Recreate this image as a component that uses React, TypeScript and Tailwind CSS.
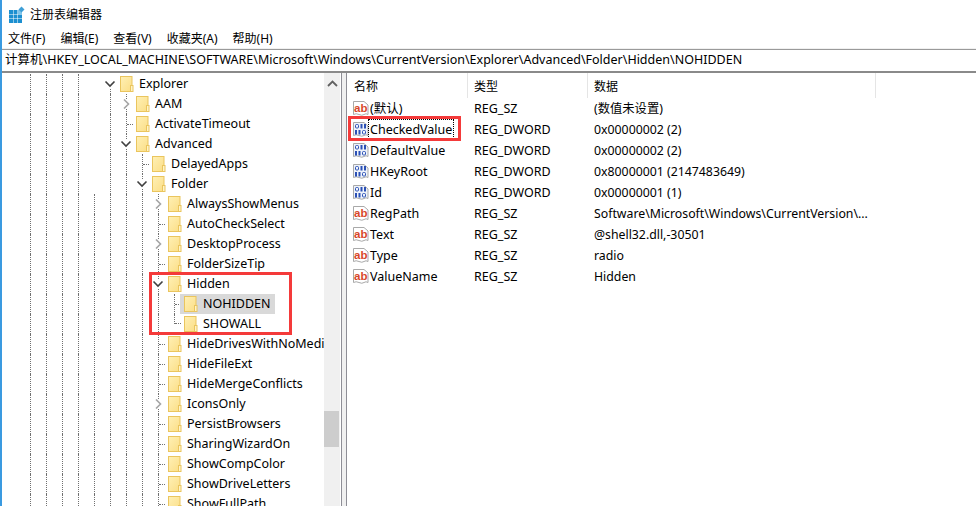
import React from "react";

type TreeRow = {
  name: string;
  depth: number;
  kind: "open" | "closed" | "leaf" | "last";
  selected?: boolean;
};

const treeRows: TreeRow[] = [
  { name: "Explorer", depth: 5, kind: "open" },
  { name: "AAM", depth: 6, kind: "closed" },
  { name: "ActivateTimeout", depth: 6, kind: "leaf" },
  { name: "Advanced", depth: 6, kind: "open" },
  { name: "DelayedApps", depth: 7, kind: "leaf" },
  { name: "Folder", depth: 7, kind: "open" },
  { name: "AlwaysShowMenus", depth: 8, kind: "closed" },
  { name: "AutoCheckSelect", depth: 8, kind: "leaf" },
  { name: "DesktopProcess", depth: 8, kind: "closed" },
  { name: "FolderSizeTip", depth: 8, kind: "leaf" },
  { name: "Hidden", depth: 8, kind: "open" },
  { name: "NOHIDDEN", depth: 9, kind: "leaf", selected: true },
  { name: "SHOWALL", depth: 9, kind: "last" },
  { name: "HideDrivesWithNoMedia", depth: 8, kind: "leaf" },
  { name: "HideFileExt", depth: 8, kind: "leaf" },
  { name: "HideMergeConflicts", depth: 8, kind: "leaf" },
  { name: "IconsOnly", depth: 8, kind: "closed" },
  { name: "PersistBrowsers", depth: 8, kind: "leaf" },
  { name: "SharingWizardOn", depth: 8, kind: "leaf" },
  { name: "ShowCompColor", depth: 8, kind: "leaf" },
  { name: "ShowDriveLetters", depth: 8, kind: "leaf" },
  { name: "ShowFullPath", depth: 8, kind: "leaf" },
];

const values = [
  { name: "(默认)", type: "REG_SZ", data: "(数值未设置)" },
  { name: "CheckedValue", type: "REG_DWORD", data: "0x00000002 (2)", focused: true },
  { name: "DefaultValue", type: "REG_DWORD", data: "0x00000002 (2)" },
  { name: "HKeyRoot", type: "REG_DWORD", data: "0x80000001 (2147483649)" },
  { name: "Id", type: "REG_DWORD", data: "0x00000001 (1)" },
  { name: "RegPath", type: "REG_SZ", data: "Software\\Microsoft\\Windows\\CurrentVersion\\..." },
  { name: "Text", type: "REG_SZ", data: "@shell32.dll,-30501" },
  { name: "Type", type: "REG_SZ", data: "radio" },
  { name: "ValueName", type: "REG_SZ", data: "Hidden" },
];

const menus = ["文件(F)", "编辑(E)", "查看(V)", "收藏夹(A)", "帮助(H)"];

function AppIcon() {
  const cells = [0, 1, 2];
  return (
    <svg width="16" height="17" viewBox="0 0 16 17" className="shrink-0">
      {cells.map((r) =>
        cells.map((c) => (
          <rect key={`${r}-${c}`} x={c * 4.5} y={4 + r * 4.5} width="4" height="4" fill={r === 0 && c === 2 ? "#7fc4ea" : "#1c8fd0"} />
        ))
      )}
      <path d="M12.5 0.5 L15.5 3.5 L12.5 6.5 L9.5 3.5 Z" fill="#3f9fd6" />
    </svg>
  );
}

function Folder() {
  return (
    <svg width="14" height="16" viewBox="0 0 14 16" className="shrink-0">
      <defs>
        <linearGradient id="folderFill" x1="0" y1="0" x2="1" y2="1">
          <stop offset="0" stopColor="#fff0b5" />
          <stop offset="1" stopColor="#fbde86" />
        </linearGradient>
      </defs>
      <rect x="0.5" y="0.5" width="11.5" height="15" fill="url(#folderFill)" stroke="#eac55e" />
      <rect x="10.5" y="9.5" width="2.5" height="6" fill="#fff3c6" stroke="#eac55e" />
    </svg>
  );
}

function AbIcon() {
  return (
    <svg width="16" height="16" viewBox="0 0 16 16" className="shrink-0">
      <path d="M0.5 0.5 H11 L15 4 V13.5 Q13 12 11 13.5 T6 13.5 T0.5 13.5 Z" fill="#fff" stroke="#a9a9a9" />
      <text x="1" y="10.5" fontSize="11.5" fontWeight="700" fontFamily="Liberation Sans" fill="#d8482a">
        ab
      </text>
    </svg>
  );
}

function BinIcon() {
  const stroke = "#2b50b5";
  return (
    <svg width="16" height="16" viewBox="0 0 16 16" className="shrink-0">
      <path d="M0.5 0.5 H11 L15 4 V13.5 Q13 12 11 13.5 T6 13.5 T0.5 13.5 Z" fill="#eef3fb" stroke="#a9a9a9" />
      <rect x="2.5" y="2.5" width="3" height="3.5" rx="1" fill="none" stroke={stroke} />
      <rect x="7.5" y="2" width="2" height="4.5" fill={stroke} />
      <rect x="11" y="2" width="2" height="4.5" fill={stroke} />
      <rect x="2" y="8" width="2" height="4.5" fill={stroke} />
      <rect x="5.5" y="8" width="2" height="4.5" fill={stroke} />
      <rect x="9.5" y="8.5" width="3" height="3.5" rx="1" fill="none" stroke={stroke} />
    </svg>
  );
}

function GuideLine({ className = "" }: { className?: string }) {
  return <div className={`ml-2 border-l border-dotted border-[#707070] ${className}`} />;
}

function Expander({ row, first }: { row: TreeRow; first: boolean }) {
  if (row.kind === "leaf" || row.kind === "last") {
    return (
      <div className="w-4 h-full shrink-0">
        <div className={`ml-2 flex border-l border-dotted border-[#707070] ${row.kind === "last" ? "h-1/2 items-end" : "h-full items-center"}`}>
          <div className="w-[6px] border-t border-dotted border-[#707070]" />
        </div>
      </div>
    );
  }
  return (
    <div className="w-4 h-full shrink-0 flex flex-col">
      <div className="flex-1">{!first && <GuideLine className="h-full" />}</div>
      {row.kind === "open" ? (
        <svg width="16" height="10" viewBox="0 0 16 10">
          <path d="M3.5 2.5 L8 7 L12.5 2.5" fill="none" stroke="#404040" strokeWidth="1.6" />
        </svg>
      ) : (
        <svg width="16" height="10" viewBox="0 0 16 10">
          <path d="M6 0.5 L10.5 5 L6 9.5" fill="none" stroke="#a6a6a6" strokeWidth="1.6" />
        </svg>
      )}
      <div className="flex-1">
        <GuideLine className="h-full" />
      </div>
    </div>
  );
}

function TreeItem({ row, index }: { row: TreeRow; index: number }) {
  const guides = Array.from({ length: row.depth }, (_, i) => i);
  return (
    <div className="flex h-5 shrink-0 items-center whitespace-nowrap">
      {guides.map((g) => (
        <div key={g} className="w-4 h-full shrink-0">
          {!(g === 4 && index < 6) && <GuideLine className="h-full" />}
        </div>
      ))}
      <Expander row={row} first={index === 0} />
      <div className={`-ml-0.5 flex h-full items-center pl-1 pr-[5px] ${row.selected ? "bg-[#d9d9d9]" : ""}`}>
        <Folder />
        <span className="ml-[5px]">{row.name}</span>
      </div>
    </div>
  );
}

export default function App() {
  return (
    <div className="flex h-[506px] w-[976px] overflow-hidden bg-white text-[12.5px] leading-none text-black font-['Noto_Sans','Noto_Sans_CJK_SC',sans-serif]">
      <div className="w-[2px] shrink-0 bg-[#3a9ae0]" />
      <div className="flex min-w-0 flex-1 flex-col">
        <div className="flex h-7 shrink-0 items-center gap-[5px] pl-[7px] text-[12px]">
          <AppIcon />
          <span className="mt-0.5">注册表编辑器</span>
        </div>
        <div className="flex h-[21px] shrink-0 items-center gap-[15px] border-b border-[#f0f0f0] pl-[6px] pt-0.5 text-[12px]">
          {menus.map((m) => (
            <span key={m}>{m}</span>
          ))}
        </div>
        <div className="flex h-6 shrink-0 items-center border-t border-b-2 border-t-[#9a9a9a] border-b-[#8a8a8a] pl-[3px] whitespace-nowrap">
          计算机\HKEY_LOCAL_MACHINE\SOFTWARE\Microsoft\Windows\CurrentVersion\Explorer\Advanced\Folder\Hidden\NOHIDDEN
        </div>
        <div className="flex min-h-0 flex-1">
          <div className="relative flex w-[322px] shrink-0 flex-col overflow-hidden pt-px pl-5">
            {treeRows.map((row, i) => (
              <TreeItem key={row.name} row={row} index={i} />
            ))}
            <div className="absolute left-[147px] top-[199px] h-[63px] w-[143px] border-[3px] border-[#f43a3a]" />
          </div>
          <div className="flex w-4 shrink-0 flex-col bg-[#f0f0f0]">
            <div className="flex h-[20px] shrink-0 items-center justify-center">
              <svg width="11" height="7" viewBox="0 0 11 7">
                <path d="M1 6 L5.5 1.5 L10 6" fill="none" stroke="#606060" strokeWidth="1.8" />
              </svg>
            </div>
            <div className="mt-[318px] h-9 w-[15px] bg-[#cdcdcd]" />
          </div>
          <div className="w-px shrink-0 bg-white" />
          <div className="flex w-[6px] shrink-0 border-x border-[#8e8e96] bg-[#f0f0f0]" />
          <div className="relative min-w-0 flex-1">
            <div className="flex h-[25px] items-center text-[12px]">
              <div className="flex h-full w-[121px] items-center border-r border-[#e5e5e5] pl-[7px] pt-[3px]">名称</div>
              <div className="flex h-full w-[120px] items-center border-r border-[#e5e5e5] pl-[6px] pt-[3px]">类型</div>
              <div className="flex h-full w-[288px] items-center border-r border-[#e5e5e5] pl-[6px] pt-[3px]">数据</div>
            </div>
            {values.map((v) => (
              <div key={v.name} className="flex h-[21px] items-center whitespace-nowrap">
                <div className="flex w-[121px] items-center pl-[6px]">
                  {v.type === "REG_SZ" ? <AbIcon /> : <BinIcon />}
                  <span className={`flex h-[20px] items-center px-px pt-0.5 ${v.focused ? "outline-1 outline-dotted outline-black" : ""}`}>{v.name}</span>
                </div>
                <div className="w-[120px] pl-[6px] pt-0.5">{v.type}</div>
                <div className="pl-[6px] pt-0.5 text-[12.3px]">{v.data}</div>
              </div>
            ))}
            <div className="absolute left-px top-[43px] h-[25px] w-[113px] border-[3px] border-[#f43a3a]" />
          </div>
        </div>
      </div>
    </div>
  );
}
